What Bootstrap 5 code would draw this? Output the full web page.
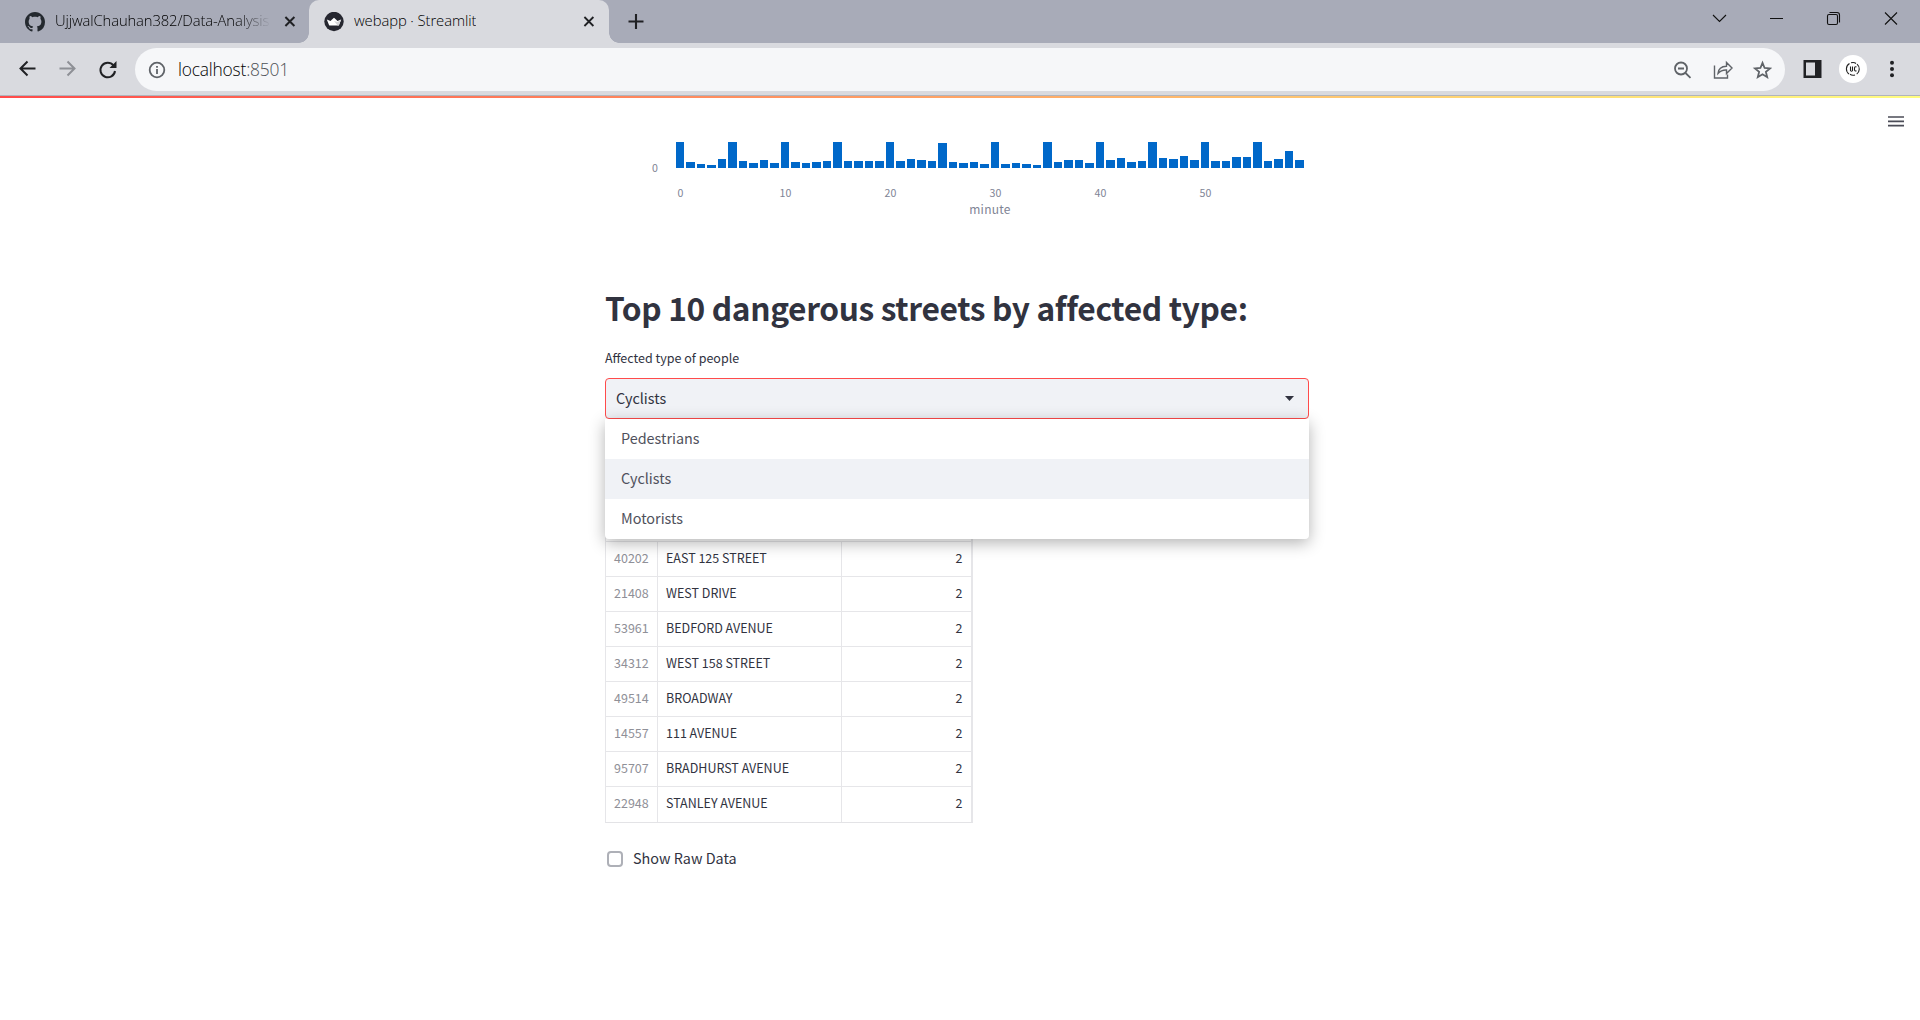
<!DOCTYPE html>
<html lang="en">
<head>
<meta charset="utf-8">
<title>webapp · Streamlit</title>
<link href="https://cdn.jsdelivr.net/npm/bootstrap@5.3.0/dist/css/bootstrap.min.css" rel="stylesheet">
<style>
html,body{height:100%;overflow:hidden}
body{font-family:"Noto Sans CJK SC","Source Sans Pro",sans-serif;font-weight:400;color:#31333f;background:#fff}
svg{display:block;flex:none}
.chrome-ui{font-family:"Open Sans","Noto Sans",sans-serif;color:#202124}
.tabstrip{height:43px;background:#a8abb8}
.tab-a{width:309px;padding:0 12px 0 25px}
.tab-title{font-size:14.8px;line-height:38px;padding-bottom:3px;margin-left:10px;white-space:nowrap;overflow:hidden;font-weight:300;color:#000;letter-spacing:-.08px}
.tab-a .tab-title{width:216px;letter-spacing:-.12px;-webkit-mask-image:linear-gradient(90deg,#000 84%,transparent)}
.tab-b{width:300px;background:#d9dadf;border-radius:10px 10px 0 0;position:relative;padding:0 13px 0 15px}
.tab-b::before,.tab-b::after{content:"";position:absolute;bottom:0;width:10px;height:10px}
.tab-b::before{left:-10px;background:radial-gradient(circle at 0 0,transparent 9.5px,#d9dadf 10px)}
.tab-b::after{right:-10px;background:radial-gradient(circle at 100% 0,transparent 9.5px,#d9dadf 10px)}
.toolbar-row{height:53px;background:#d9dadf;border-bottom:1px solid #b1b4bb;padding:5px 17px 0 16px}
.omnibox{height:43px;width:1650px;margin-left:16px;background:#f6f7f9;border-radius:22px;padding:0 13px 0 13px}
.addr{font-size:17.4px;font-weight:300;letter-spacing:-.2px;margin-left:12px;line-height:40px;padding-bottom:2px;color:#000}
.addr span{color:#4d5156}
.avatar{width:28px;height:28px;background:#fff;margin-left:17px}
.side-icon{margin-left:18px}
.dots-icon{margin-left:22px}
.side-icon,.avatar,.dots-icon{margin-bottom:5px}
.deco{height:2px;background:linear-gradient(90deg,#ff4b4b,#fffd80)}
.page-top{height:30px;padding-top:18px}
.main-col{width:704px;margin-left:605px}
.plot{height:26px;margin:14px 0 0 70.6px;width:630px}
.bar-slot{width:10.5px}
.bar-fill{width:8.9px;background:#0068c9}
.axis-row{color:#808495;font-size:10.6px;line-height:14px}
.zero-row{margin-top:-7px;padding-left:47px}
.ticks{width:630px;margin:11px 0 0 60.5px}
.ticks div{width:105px}
.tick-in{display:inline-block;width:30px;text-align:center}
.axis-title{font-size:12px;line-height:16px;color:#808495;letter-spacing:.25px;width:629px;margin:1px 0 0 70.5px}
h1.title{font-size:31.7px;font-weight:700;letter-spacing:-.35px;line-height:44px;margin:68px 0 0;white-space:nowrap}
.lbl{font-size:12.5px;line-height:18px;margin-top:20px}
.select-box{height:41px;margin-top:11px;background:#f0f2f6;border:1px solid #ff4b4b;border-radius:4px;padding:0 14px 0 10px;font-size:14.4px;position:relative}
.picked{padding-bottom:2px}
.option-menu{position:absolute;left:-1px;top:40px;width:704px;background:#fff;border-radius:0 0 4px 4px;box-shadow:0 4px 16px rgba(0,0,0,.3);z-index:5;color:#4f515c}
.option-menu div{height:40px;line-height:38px;padding-left:16px}
.option-menu .sel{background:#f0f2f6}
.grid-table{width:368px;margin-top:87px;border:1px solid #e6e6e9;border-right-width:2px;border-bottom-color:#e3e3e6}
.grid-gap{height:34px}
.grid-line{height:35px;border-top:1px solid #e6e6e9;font-size:12.5px;line-height:32px}
.grid-line:last-child{height:36px}
.grid-line div{white-space:nowrap}
.c1{width:51px;padding-left:8px;color:#8f9098}
.c2{width:184px;border-left:1px solid #e6e6e9;padding-left:8px}
.c3{border-left:1px solid #e6e6e9;padding-right:8.5px;text-align:right;flex:1}
.raw{margin:23px 0 0 2px;font-size:14.4px;line-height:24px}
.raw span{padding-bottom:2px}
.tick-box{width:16px;height:16px;border:2px solid #aeb0b7;border-radius:4px;margin-right:10px}
</style>
<script src="https://cdn.jsdelivr.net/npm/bootstrap@5.3.0/dist/js/bootstrap.bundle.min.js"></script>
</head>
<body>
<header class="chrome-ui">
  <div class="tabstrip d-flex">
    <div class="tab-a d-flex align-items-center">
      <svg width="20" height="20" viewBox="0 0 16 16" fill="#24292f"><path d="M8 0C3.58 0 0 3.58 0 8c0 3.54 2.29 6.53 5.47 7.59.4.07.55-.17.55-.38 0-.19-.01-.82-.01-1.49-2.01.37-2.53-.49-2.69-.94-.09-.23-.48-.94-.82-1.13-.28-.15-.68-.52-.01-.53.63-.01 1.08.58 1.23.82.72 1.21 1.87.87 2.33.66.07-.52.28-.87.51-1.07-1.78-.2-3.64-.89-3.64-3.95 0-.87.31-1.59.82-2.15-.08-.2-.36-1.02.08-2.12 0 0 .67-.21 2.2.82.64-.18 1.32-.27 2-.27s1.36.09 2 .27c1.53-1.04 2.2-.82 2.2-.82.44 1.1.16 1.92.08 2.12.51.56.82 1.27.82 2.15 0 3.07-1.87 3.75-3.65 3.95.29.25.54.73.54 1.48 0 1.07-.01 1.93-.01 2.2 0 .21.15.46.55.38A8.01 8.01 0 0 0 16 8c0-4.42-3.58-8-8-8z"/></svg>
      <div class="tab-title">UjjwalChauhan382/Data-Analysis</div>
      <svg class="ms-auto" width="14" height="14" viewBox="0 0 14 14" stroke="#202124" stroke-width="2"><path d="M2.400 2l9 9M11.400 2l-9 9"/></svg>
    </div>
    <div class="tab-b d-flex align-items-center">
      <svg width="20" height="20" viewBox="0 0 20 20"><circle cx="10" cy="9.500" r="9.700" fill="#262730"/><path d="M2.800 7.400l3.700 1.600L8 7.600l2-1.800 2 1.800L13.500 9l3.700-1.600-2 5q-.3 1.200-1.500 1.200H6.300q-1.200 0-1.500-1.200z" fill="#fff"/><path d="M10 9l3.500 1 3.700-2.600-2 5q-.3 1.200-1.500 1.200z" fill="#d5d5d8"/></svg>
      <div class="tab-title">webapp · Streamlit</div>
      <svg class="ms-auto" width="14" height="14" viewBox="0 0 14 14" stroke="#202124" stroke-width="1.800"><path d="M2.400 2l9 9M11.400 2l-9 9"/></svg>
    </div>
    <svg class="align-self-center ms-3 me-auto" width="22" height="16" viewBox="0 0 22 16" stroke="#202124" stroke-width="2.100"><path d="M3.500 7.500h15M11 0v15"/></svg>
    <svg width="210" height="43" viewBox="1710 0 210 43" fill="none" stroke="#111" stroke-width="1.100"><path d="M1713 15l6.500 6.500L1726 15M1770 18.500h13M1885 12.500l12 12M1897 12.500l-12 12"/><rect x="1827.500" y="14.500" width="10" height="10" rx="1.500"/><path d="M1829.500 12.500h7.500q2.500 0 2.500 2.500v7.500"/></svg>
  </div>
  <div class="toolbar-row d-flex">
    <svg width="103" height="43" viewBox="16 48 103 43" fill="none" stroke="#202124" stroke-width="2"><path d="M35.500 68.500H21M27.500 61.500l-7 7 7 7"/><path stroke="#8e9096" d="M59.500 68.500H74M67.500 61.500l7 7-7 7"/><path d="M113.500 65.500A7.300 7.300 0 1 0 115 71"/><path d="M116.500 61v7h-7z" fill="#202124" stroke="none"/></svg>
    <div class="omnibox d-flex align-items-center">
      <svg width="18" height="18" viewBox="0 0 18 18" fill="none" stroke="#5f6368" stroke-width="1.800"><circle cx="9" cy="9" r="7.300"/><path d="M9 8v5M9 5v1.800"/></svg>
      <div class="addr">localhost<span>:8501</span></div>
      <svg class="ms-auto" width="100" height="22" viewBox="1672 58.500 100 22" fill="none" stroke="#5f6368" stroke-width="1.800"><circle cx="1681" cy="68" r="6"/><path d="M1678 68h6M1685.500 72.500l5 4.800"/><path stroke-width="1.400" d="M1714.500 65v12.500h13V74M1718 73q.5-7 8.500-7.300V62l5.500 5.500-5.500 5.500v-3.500q-5-.3-8.500 3.500z"/><path stroke-width="1.800" d="M1762.500 62.400l2.100 5.100 5.400.4-4.100 3.500 1.300 5.300-4.700-2.900-4.700 2.900 1.300-5.300-4.100-3.500 5.400-.4z"/></svg>
    </div>
    <svg class="side-icon align-self-center" width="19" height="20" viewBox="0 0 19 20"><path d="M.5 1h18v18H.5z" fill="#202124"/><path d="M3 3.500h9v13H3z" fill="#d9dadf"/></svg>
    <div class="avatar rounded-circle d-flex align-items-center justify-content-center align-self-center">
      <svg width="16" height="16" viewBox="0 0 16 16" fill="none" stroke="#222" stroke-width="1.100"><path d="M4.500 2.500A6.300 6.300 0 0 0 4 13M6 1.800q3-1 5 .7M12 3.200a6.300 6.300 0 0 1-.3 9.900M10 14q-3 .8-5-.7"/><path d="M5.500 5.500v4q1 1.500 2 0v-4M11.500 6q-2-1-2 1.500v1q0 2 2 1.300"/></svg>
    </div>
    <svg class="dots-icon align-self-center" width="6" height="18" viewBox="0 0 6 18" fill="#202124"><circle cx="3" cy="2.700" r="2"/><circle cx="3" cy="9" r="2"/><circle cx="3" cy="15.300" r="2"/></svg>
  </div>
</header>
<div class="deco"></div>
<div class="page-top d-flex justify-content-end pe-3">
  <svg width="16" height="11" viewBox="0 0 16 11" stroke="#4b4c57" stroke-width="1.700"><path d="M0 1h16M0 5.300h16M0 9.600h16"/></svg>
</div>
<main class="main-col">
  <div class="plot d-flex align-items-end" id="bars"></div>
  <div class="axis-row zero-row">0</div>
  <div class="axis-row d-flex ticks">
    <div><span class="tick-in">0</span></div><div><span class="tick-in">10</span></div><div><span class="tick-in">20</span></div><div><span class="tick-in">30</span></div><div><span class="tick-in">40</span></div><div><span class="tick-in">50</span></div>
  </div>
  <div class="axis-title text-center">minute</div>
  <h1 class="title">Top 10 dangerous streets by affected type:</h1>
  <div class="lbl">Affected type of people</div>
  <div class="select-box d-flex align-items-center justify-content-between">
    <span class="picked">Cyclists</span>
    <svg width="9" height="5" viewBox="0 0 9 5"><path d="M0 0h9L4.500 5z" fill="#31333f"/></svg>
    <div class="option-menu"><div>Pedestrians</div><div class="sel">Cyclists</div><div>Motorists</div></div>
  </div>
  <div class="grid-table">
    <div class="grid-gap"></div>
    <div class="grid-line d-flex"><div class="c1">40202</div><div class="c2">EAST 125 STREET</div><div class="c3">2</div></div>
    <div class="grid-line d-flex"><div class="c1">21408</div><div class="c2">WEST DRIVE</div><div class="c3">2</div></div>
    <div class="grid-line d-flex"><div class="c1">53961</div><div class="c2">BEDFORD AVENUE</div><div class="c3">2</div></div>
    <div class="grid-line d-flex"><div class="c1">34312</div><div class="c2">WEST 158 STREET</div><div class="c3">2</div></div>
    <div class="grid-line d-flex"><div class="c1">49514</div><div class="c2">BROADWAY</div><div class="c3">2</div></div>
    <div class="grid-line d-flex"><div class="c1">14557</div><div class="c2">111 AVENUE</div><div class="c3">2</div></div>
    <div class="grid-line d-flex"><div class="c1">95707</div><div class="c2">BRADHURST AVENUE</div><div class="c3">2</div></div>
    <div class="grid-line d-flex"><div class="c1">22948</div><div class="c2">STANLEY AVENUE</div><div class="c3">2</div></div>
  </div>
  <div class="raw d-flex align-items-center"><div class="tick-box"></div><span>Show Raw Data</span></div>
</main>
<script>
// Crashes per minute, bar heights in pixels
const counts=[26,5.7,4,3,9,26,6.6,5,7.7,4.6,26,6,4.6,5.6,6.6,26,7,6.6,6.6,6.6,26,7,9,7.7,7,25.5,5.6,5,5.6,4.5,26,4,4.6,4,3.4,26,5.6,7.7,7.7,5,26,7.7,9.7,6,7.5,26,10,9,12,7.6,26,7,7,11,11,26,7,9,17,8];
document.getElementById('bars').innerHTML=counts.map(h=>`<div class="bar-slot"><div class="bar-fill" style="height:${h}px"></div></div>`).join('');
</script>
</body>
</html>
